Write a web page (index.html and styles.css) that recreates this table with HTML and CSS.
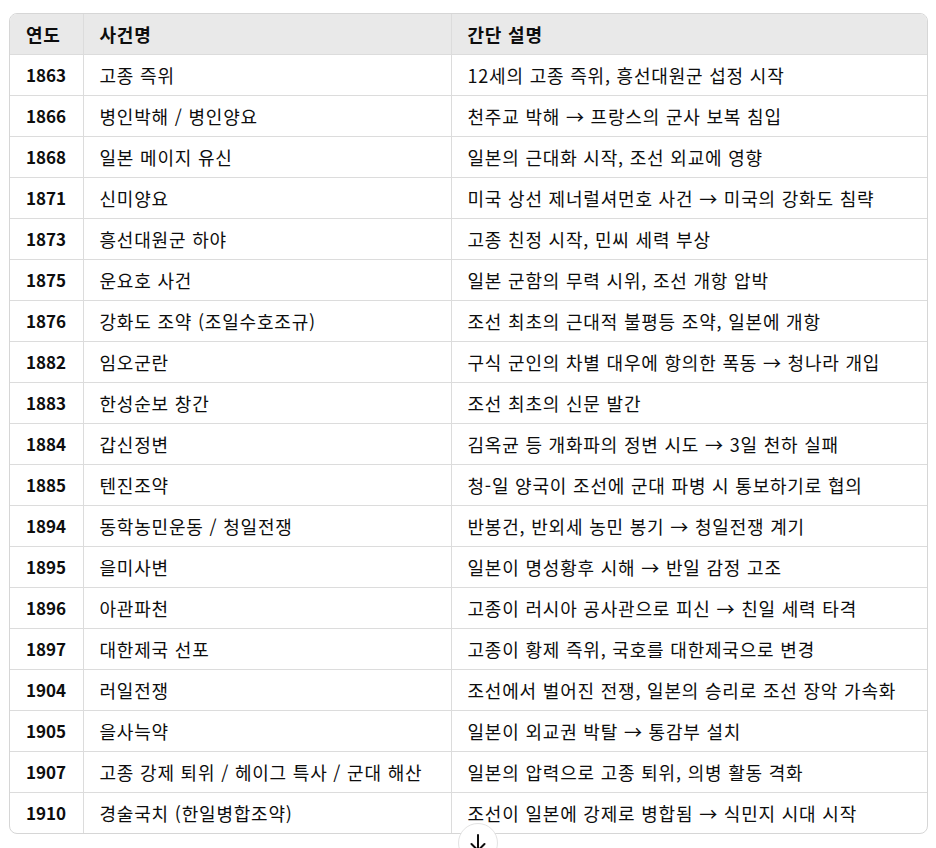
FILE: index.html
```html
<!DOCTYPE html>
<html lang="ko">
<head>
<meta charset="utf-8">
<link rel="stylesheet" href="styles.css">
</head>
<body>
<div class="page">
  <div class="table-wrap">
    <table class="events">
      <colgroup>
        <col class="c-year">
        <col class="c-name">
        <col class="c-desc">
      </colgroup>
      <thead>
        <tr><th>연도</th><th>사건명</th><th>간단 설명</th></tr>
      </thead>
      <tbody>
        <tr><td class="y">1863</td><td>고종 즉위</td><td>12세의 고종 즉위, 흥선대원군 섭정 시작</td></tr>
        <tr><td class="y">1866</td><td>병인박해 / 병인양요</td><td>천주교 박해 → 프랑스의 군사 보복 침입</td></tr>
        <tr><td class="y">1868</td><td>일본 메이지 유신</td><td>일본의 근대화 시작, 조선 외교에 영향</td></tr>
        <tr><td class="y">1871</td><td>신미양요</td><td>미국 상선 제너럴셔먼호 사건 → 미국의 강화도 침략</td></tr>
        <tr><td class="y">1873</td><td>흥선대원군 하야</td><td>고종 친정 시작, 민씨 세력 부상</td></tr>
        <tr><td class="y">1875</td><td>운요호 사건</td><td>일본 군함의 무력 시위, 조선 개항 압박</td></tr>
        <tr><td class="y">1876</td><td>강화도 조약 (조일수호조규)</td><td>조선 최초의 근대적 불평등 조약, 일본에 개항</td></tr>
        <tr><td class="y">1882</td><td>임오군란</td><td>구식 군인의 차별 대우에 항의한 폭동 → 청나라 개입</td></tr>
        <tr><td class="y">1883</td><td>한성순보 창간</td><td>조선 최초의 신문 발간</td></tr>
        <tr><td class="y">1884</td><td>갑신정변</td><td>김옥균 등 개화파의 정변 시도 → 3일 천하 실패</td></tr>
        <tr><td class="y">1885</td><td>텐진조약</td><td>청-일 양국이 조선에 군대 파병 시 통보하기로 협의</td></tr>
        <tr><td class="y">1894</td><td>동학농민운동 / 청일전쟁</td><td>반봉건, 반외세 농민 봉기 → 청일전쟁 계기</td></tr>
        <tr><td class="y">1895</td><td>을미사변</td><td>일본이 명성황후 시해 → 반일 감정 고조</td></tr>
        <tr><td class="y">1896</td><td>아관파천</td><td>고종이 러시아 공사관으로 피신 → 친일 세력 타격</td></tr>
        <tr><td class="y">1897</td><td>대한제국 선포</td><td>고종이 황제 즉위, 국호를 대한제국으로 변경</td></tr>
        <tr><td class="y">1904</td><td>러일전쟁</td><td>조선에서 벌어진 전쟁, 일본의 승리로 조선 장악 가속화</td></tr>
        <tr><td class="y">1905</td><td>을사늑약</td><td>일본이 외교권 박탈 → 통감부 설치</td></tr>
        <tr><td class="y">1907</td><td>고종 강제 퇴위 / 헤이그 특사 / 군대 해산</td><td>일본의 압력으로 고종 퇴위, 의병 활동 격화</td></tr>
        <tr><td class="y">1910</td><td>경술국치 (한일병합조약)</td><td>조선이 일본에 강제로 병합됨 → 식민지 시대 시작</td></tr>
      </tbody>
    </table>
  </div>
  <div class="scroll-down" role="button" aria-label="아래로 스크롤">
    <svg width="20" height="20" viewBox="0 0 20 20" fill="none" stroke="#0d0d0d" stroke-width="2" stroke-linecap="round" stroke-linejoin="round"><path d="M10 2v15.5M3.5 11l6.5 6.5 6.5-6.5"/></svg>
  </div>
</div>
</body>
</html>
```
FILE: styles.css
```css
html, body {
  margin: 0;
  padding: 0;
  background: #ffffff;
  height: 100%;
  overflow: hidden;
}
body {
  font-family: "Noto Sans CJK KR", "Noto Sans", sans-serif;
  color: #0d0d0d;
  font-size: 18px;
}
.page {
  position: relative;
  height: 100%;
  box-sizing: border-box;
  padding: 13px 8px 0 9px;
  overflow: hidden;
}
.table-wrap {
  width: 919px;
  border: 1px solid #d6d6d6;
  border-radius: 8px;
  overflow: hidden;
  box-sizing: border-box;
}
.events {
  width: 100%;
  border-collapse: collapse;
  table-layout: fixed;
}
.c-year { width: 73px; }
.c-name { width: 368px; }
.events th, .events td {
  padding: 0 16px;
  text-align: left;
  border-right: 1px solid #dcdcdc;
  border-bottom: 1px solid #dcdcdc;
  white-space: nowrap;
  line-height: 24px;
  letter-spacing: 0.8px;
  box-sizing: border-box;
}
.events th:last-child, .events td:last-child { border-right: none; }
.events tbody tr:last-child td { border-bottom: none; }
.events th {
  background: #e9e9e9;
  font-weight: 700;
  height: 40px;
}
.events td { height: 41px; }
.events td.y {
  font-weight: 700;
  font-size: 17px;
  letter-spacing: 0;
}
.scroll-down {
  position: absolute;
  left: 458px;
  top: 823px;
  width: 40px;
  height: 40px;
  border-radius: 50%;
  border: 1px solid #e3e3e3;
  background: #ffffff;
  box-sizing: border-box;
  display: flex;
  align-items: center;
  justify-content: center;
}
```
